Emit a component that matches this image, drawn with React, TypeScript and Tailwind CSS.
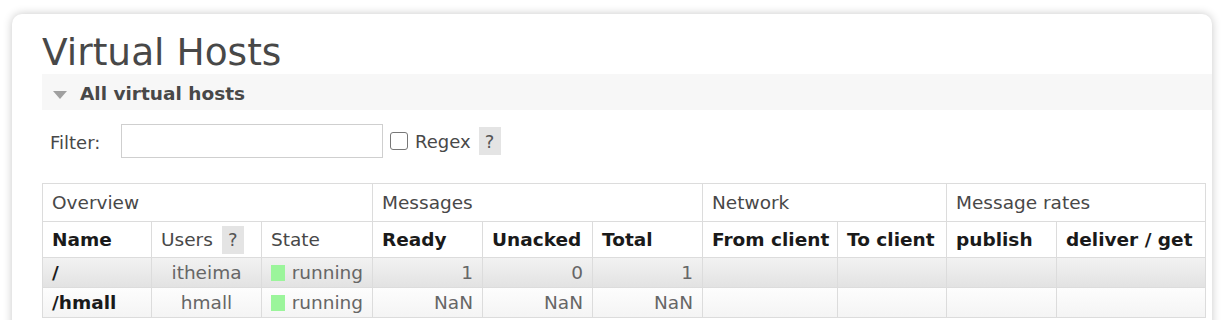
import React from 'react';

const cell = 'border border-[#dcdcdc] px-[9px] align-middle';

const HelpBox = ({ className = '' }: { className?: string }) => (
  <span className={`inline-flex items-center justify-center bg-[#e4e4e4] text-[#555] ${className}`}>?</span>
);

const StateCell = () => (
  <td className={`${cell} text-[#666]`}>
    <span className="flex items-center gap-[7px]">
      <span className="inline-block w-[16px] h-[16px] bg-[#9bf59b]"></span>
      running
    </span>
  </td>
);

const App = () => {
  return (
    <div
      className="w-[1225px] h-[320px] overflow-hidden bg-white pt-[14px] pl-[12px] pr-[13px]"
      style={{ fontFamily: '"DejaVu Sans", Verdana, sans-serif' }}
    >
      <div className="h-[330px] rounded-[10px] bg-white shadow-[0_0_10px_rgba(0,0,0,0.22)] pt-[20px] pl-[30px]">
        {/* Title */}
        <h1 className="text-[37.5px] leading-[36px] text-[#484848] mb-[4px]">Virtual Hosts</h1>

        {/* Section bar */}
        <div className="h-[36px] bg-[#f7f7f7] flex items-center pl-[10px] pt-[4px] gap-[12px]">
          <svg width="16" height="10" viewBox="0 0 16 10" className="mt-[1px]">
            <polygon points="1,1 15,1 8,9" fill="#a0a0a0" />
          </svg>
          <span className="text-[18.5px] font-bold text-[#484848]">All virtual hosts</span>
        </div>

        {/* Filter row */}
        <div className="flex items-center h-[34px] mt-[14px] text-[18px] text-[#484848]">
          <span className="ml-[8px] w-[71px] pt-[3px]">Filter:</span>
          <div className="w-[262px] h-[34px] border border-[#cfcfcf] bg-white"></div>
          <span className="ml-[7px] w-[18px] h-[18px] border-[1.5px] border-[#777] rounded-[3px]"></span>
          <span className="ml-[7px] pt-[1px]">Regex</span>
          <HelpBox className="ml-[8px] w-[22px] h-[28px] text-[18px]" />
        </div>

        {/* Table */}
        <table className="mt-[25px] w-[1163px] border-collapse table-fixed text-[18.5px]">
          <colgroup>
            <col className="w-[109px]" />
            <col className="w-[110px]" />
            <col className="w-[111px]" />
            <col className="w-[110px]" />
            <col className="w-[110px]" />
            <col className="w-[110px]" />
            <col className="w-[135px]" />
            <col className="w-[109px]" />
            <col className="w-[110px]" />
            <col className="w-[149px]" />
          </colgroup>
          <thead>
            <tr className="h-[38px] text-[#484848] text-left">
              <th colSpan={3} className={`${cell} font-normal`}>Overview</th>
              <th colSpan={3} className={`${cell} font-normal`}>Messages</th>
              <th colSpan={2} className={`${cell} font-normal`}>Network</th>
              <th colSpan={2} className={`${cell} font-normal`}>Message rates</th>
            </tr>
            <tr className="h-[36px] text-[#1a1a1a] text-left">
              <th className={`${cell} font-bold`}>Name</th>
              <th className={`${cell} font-normal text-[#484848] whitespace-nowrap`}>
                <span className="flex items-center gap-[9px]">
                  Users
                  <HelpBox className="w-[22px] h-[28px] text-[18px]" />
                </span>
              </th>
              <th className={`${cell} font-normal text-[#484848]`}>State</th>
              <th className={`${cell} font-bold`}>Ready</th>
              <th className={`${cell} font-bold`}>Unacked</th>
              <th className={`${cell} font-bold`}>Total</th>
              <th className={`${cell} font-bold whitespace-nowrap`}>From client</th>
              <th className={`${cell} font-bold whitespace-nowrap`}>To client</th>
              <th className={`${cell} font-bold`}>publish</th>
              <th className={`${cell} font-bold whitespace-nowrap`}>deliver / get</th>
            </tr>
          </thead>
          <tbody>
            <tr className="h-[30px] bg-gradient-to-b from-[#f2f2f2] to-[#e2e2e2]">
              <td className={`${cell} font-bold text-[#1a1a1a]`}>/</td>
              <td className={`${cell} text-center text-[#666]`}>itheima</td>
              <StateCell />
              <td className={`${cell} text-right text-[#666]`}>1</td>
              <td className={`${cell} text-right text-[#666]`}>0</td>
              <td className={`${cell} text-right text-[#666]`}>1</td>
              <td className={cell}></td>
              <td className={cell}></td>
              <td className={cell}></td>
              <td className={cell}></td>
            </tr>
            <tr className="h-[30px] bg-gradient-to-b from-[#fdfdfd] to-[#f4f4f4]">
              <td className={`${cell} font-bold text-[#1a1a1a]`}>/hmall</td>
              <td className={`${cell} text-center text-[#666]`}>hmall</td>
              <StateCell />
              <td className={`${cell} text-right text-[#666]`}>NaN</td>
              <td className={`${cell} text-right text-[#666]`}>NaN</td>
              <td className={`${cell} text-right text-[#666]`}>NaN</td>
              <td className={cell}></td>
              <td className={cell}></td>
              <td className={cell}></td>
              <td className={cell}></td>
            </tr>
          </tbody>
        </table>
      </div>
    </div>
  );
};

export default App;
